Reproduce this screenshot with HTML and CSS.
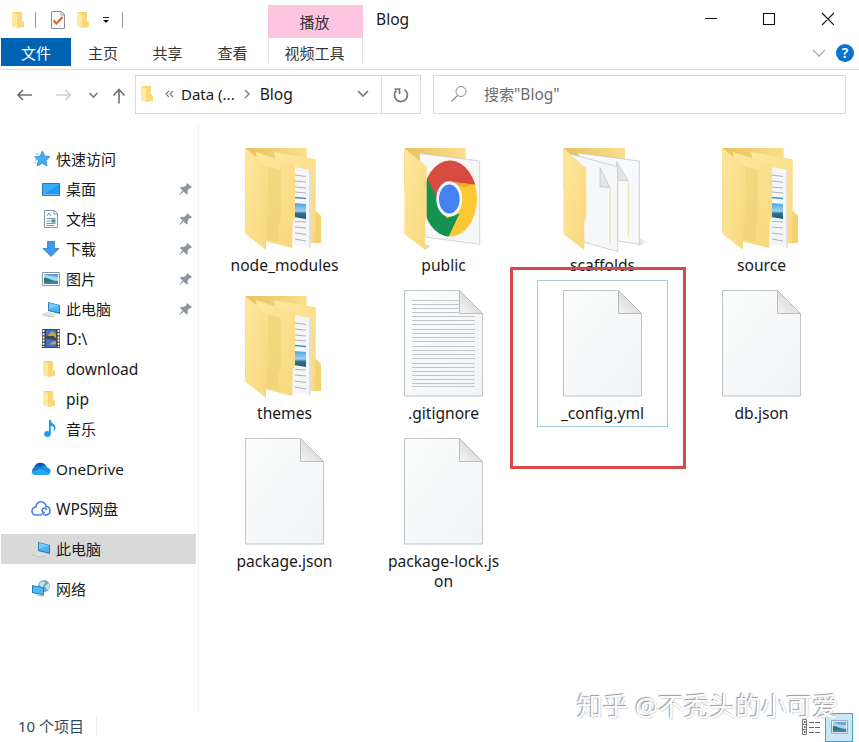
FILE: index.html
```html
<!DOCTYPE html>
<html lang="zh-CN">
<head>
<meta charset="utf-8">
<title>Blog</title>
<link rel="stylesheet" href="styles.css">
</head>
<body>
<svg class="defs" width="0" height="0" aria-hidden="true">
  <defs>
    <linearGradient id="gFlap" x1="0" y1="0" x2="1" y2="1"><stop offset="0" stop-color="#ffe79f"/><stop offset="1" stop-color="#f8d87c"/></linearGradient>
    <linearGradient id="gBack" x1="0" y1="0" x2="1" y2="0"><stop offset="0" stop-color="#e6c25e"/><stop offset="1" stop-color="#fbdf8b"/></linearGradient>
    <linearGradient id="gPaper" x1="0" y1="0" x2="1" y2="1"><stop offset="0" stop-color="#fcfdfd"/><stop offset="1" stop-color="#f1f3f5"/></linearGradient>
    <linearGradient id="gFold" x1="0" y1="1" x2="1" y2="0"><stop offset="0" stop-color="#f4f4f4"/><stop offset="1" stop-color="#c9cbcc"/></linearGradient>
    <linearGradient id="gPic" x1="0" y1="0" x2="0" y2="1"><stop offset="0" stop-color="#4aa3e0"/><stop offset=".5" stop-color="#9fd2ef"/><stop offset=".65" stop-color="#33718c"/><stop offset="1" stop-color="#1d597c"/></linearGradient>
    <linearGradient id="gShade" x1="0" y1="0" x2="1" y2="0"><stop offset="0" stop-color="#bbb" stop-opacity=".6"/><stop offset="1" stop-color="#ddd" stop-opacity="0"/></linearGradient>
    <clipPath id="cDisc"><ellipse cx="57" cy="58.6" rx="27" ry="38"/></clipPath>
  </defs>
  <symbol id="folder-docs" viewBox="0 0 100 116">
    <path d="M11.3 8H72.700V90H11.3z" fill="url(#gBack)"/>
    <path d="M40 12l41.700 7.300V71l5.300 5v27H60z" fill="url(#gFlap)"/>
    <path d="M81.700 71l5.300 5v27h-6z" fill="#f4d071"/>
    <path d="M60 27l16.300 3v78L58 104z" fill="#f5f6f7"/>
    <path d="M75 30l1.800 0v78l-1.800-.4z" fill="#dcdfe2"/>
    <path d="M61 35l11 1.500M61 41l11 1.200M61 47l11 1M61 52l11 1M61 81.500l11 .5M61 87l11 1M61 93l11 1.500M61 99l11 2" stroke="#9ba0a4" stroke-width=".8"/>
    <path d="M61 57.500l11 1" stroke="#3894cb" stroke-width="1.600"/>
    <path d="M60 63l12 1v15l-12-2z" fill="url(#gPic)"/>
    <path d="M22 12l39 13v53l-2.700 4v26L30 101z" fill="url(#gFlap)"/>
    <path d="M33.700 26l13 4v51l-2 4v17l-12.700-2z" fill="#edcf72" opacity=".6"/>
    <path d="M11.300 8l22.400 18.700V78L32 82v27.700L11.300 94z" fill="url(#gFlap)"/>
  </symbol>
  <symbol id="folder-chrome" viewBox="0 0 100 116">
    <path d="M86 98l12 4-12 4zM32 104l6 2-6 4z" fill="url(#gShade)"/>
    <path d="M11.300 8H72.700V50H11.300z" fill="url(#gBack)"/>
    <path d="M26.300 13.300L86.700 21v83.300L32 97z" fill="#f7f7f8" stroke="#c5c7c9" stroke-width=".7"/>
    <g clip-path="url(#cDisc)">
      <path d="M20 15h70v90H20z" fill="#fbc934"/>
      <path d="M20 20h70v25.500L58 42 45 63 33 38z" fill="#d84b40"/>
      <path d="M33 36l12.500 25 8 17 13-4.500L55 98H30z" fill="#159152"/>
      <path d="M58 42l22 2.500-9 3z" fill="#e9aa28"/>
    </g>
    <ellipse cx="56.300" cy="59" rx="13" ry="17.700" fill="#f2f5fb"/>
    <ellipse cx="56.300" cy="59" rx="10.300" ry="14.500" fill="#4681f0"/>
    <path d="M11.300 8l22.400 18.700V78L32 82v27.700L11.300 94z" fill="url(#gFlap)"/>
  </symbol>
  <symbol id="folder-papers" viewBox="0 0 100 116">
    <path d="M86 98l12 4-12 4z" fill="url(#gShade)"/>
    <path d="M11.300 8H73V50H11.300z" fill="url(#gBack)"/>
    <path d="M26 13l61.300 8v83.300L66 101" fill="#f8f9fa" stroke="#bcbfc1" stroke-width=".7"/>
    <path d="M64.700 21.700V40l11.600 1z" fill="#e4e6e7" stroke="#b9bcbe" stroke-width=".6"/>
    <path d="M76.300 42v55" stroke="#eadfb3"/>
    <path d="M18.700 14L65.700 26.700v85L32 102z" fill="#f5f7f9" stroke="#bcbfc1" stroke-width=".7"/>
    <path d="M48 27.500v19l10 1.200z" fill="#e4e6e7" stroke="#b3b6b8" stroke-width=".6"/>
    <path d="M58 48v55" stroke="#e6dba9"/>
    <path d="M11.300 8l21 18.700 2 1V77L32.300 82v28L11.300 94z" fill="url(#gFlap)"/>
  </symbol>
  <symbol id="file-blank" viewBox="0 0 100 116">
    <path d="M11.500 2.500h55l23 23v82.500h-78z" fill="url(#gPaper)" stroke="#c0c4c6"/>
    <path d="M66.500 2.500v23h23z" fill="url(#gFold)" stroke="#b9bdbf"/>
  </symbol>
  <symbol id="file-text" viewBox="0 0 100 116">
    <use href="#file-blank"/>
    <path d="M19 12.500h47M19 16.500h47M19 20.500h47M19 24.500h47M19 28.500h63M19 32.500h63M19 36.500h63M19 41.500h63M19 45.500h63M19 49.500h63M19 53.500h63M19 58.500h63M19 62.500h63M19 66.500h63M19 70.500h63M19 75.500h63M19 79.500h63M19 83.500h63M19 87.500h63M19 91.500h63M19 95.500h63M19 98.500h63" stroke="#c4c7c9"/>
  </symbol>
  <symbol id="i-folder" viewBox="0 0 14 18">
    <path d="M1 1h10v9l2 1v5H3z" fill="#f5cf6c"/>
    <path d="M1 1l5 2v14l-5-2z" fill="#ffe8a0"/><path d="M6 3l5-2v9l2 1v5l-7 1z" fill="#f9d878"/>
  </symbol>
  <symbol id="i-pin" viewBox="0 0 14 14">
    <path d="M8 1l5 4-1.500 1.300-1-.1-2 2.500.3 3-1.300.8-3-3L1 13l-.5-.5 3-4L1 6l1-1.200 3 .2 2.500-2z" fill="#8b96a0"/>
  </symbol>
  <symbol id="i-pc" viewBox="0 0 20 20">
    <path d="M7 3l12 3v9L7 12z" fill="#317faf"/><path d="M8 4l10 2.600v7L8 11z" fill="#4ab6f5"/><path d="M8 4l10 2.600L8 10z" fill="#72ccfb"/>
    <path d="M1 15l6-2 8 3-6 2z" fill="#dce0e4"/><path d="M1 15.500l8 2.500 5-1" fill="none" stroke="#b0b7bd" stroke-width=".7"/>
  </symbol>
  <symbol id="i-picture" viewBox="0 0 20 16">
    <path d="M1.500 1.500h17v13h-17z" fill="#fff" stroke="#8e979d"/><path d="M3 3h14v10H3z" fill="#a5d4f5"/>
    <path d="M3 3h14v3L9 5z" fill="#5f9fda"/><path d="M3 7c4-1 6 3 14 3v3H3z" fill="#317665"/><path d="M3 11l14-1v3H3z" fill="#3d83b2"/>
  </symbol>
</svg>

<div class="window">
  <header class="header">
    <div class="header-left">
      <div class="quick">
        <svg class="q-folder" width="14" height="18"><use href="#i-folder"/></svg>
        <span class="sep"></span>
        <svg class="q-check" width="16" height="20" viewBox="0 0 16 20"><path d="M1.500 1.500h10l3 3v14h-13z" fill="#fbfbfb" stroke="#8f8f8f"/><path d="M11 1.500v3.500h3.500" fill="none" stroke="#8f8f8f"/><path d="M3.500 10.500l3 3 6-6.500" fill="none" stroke="#d9602f" stroke-width="2"/></svg>
        <svg class="q-folder2" width="14" height="18"><use href="#i-folder"/></svg>
        <svg class="q-more" width="8" height="8" viewBox="0 0 8 8"><path d="M1 1.500h6" stroke="#222"/><path d="M1 4h6L4 7z" fill="#111"/></svg>
        <span class="sep"></span>
      </div>
      <nav class="tabs">
        <span class="tab tab-file">文件</span><span class="tab tab-home">主页</span><span class="tab">共享</span><span class="tab">查看</span>
      </nav>
    </div>
    <div class="context">
      <div class="context-title">播放</div>
      <div class="context-tab">视频工具</div>
    </div>
    <div class="header-right">
      <div class="caption">
        <span class="latin">Blog</span>
        <svg width="130" height="16" viewBox="0 0 130 16"><path d="M1 7.500h12M59.500 2.500h11v11h-11zM118 2l12 12M130 2l-12 12" fill="none" stroke="#111" stroke-width="1.100"/></svg>
      </div>
      <div class="ribbon-tools">
        <svg width="14" height="8" viewBox="0 0 14 8"><path d="M1 1l6 6 6-6" fill="none" stroke="#aaa" stroke-width="1.300"/></svg>
        <span class="help">?</span>
      </div>
    </div>
  </header>

  <div class="address-row">
    <svg class="nav-icons" width="120" height="20" viewBox="0 0 120 20" fill="none" stroke-width="1.600">
      <path d="M32 10H18M23 5l-5 5 5 5" stroke="#707070"/><path d="M56 10h14M65.500 5l5 5-5 5" stroke="#d0d0d0"/>
      <path d="M89.500 8l4 4 4-4" stroke="#777"/><path d="M119 18.500V4.500M113.500 10.500l5.500-6 5.500 6" stroke="#707070"/>
      </svg>
    <div class="address">
      <svg class="a-folder" width="14" height="18"><use href="#i-folder"/></svg>
      <svg class="a-more" width="9" height="8" viewBox="0 0 9 8"><path d="M4 1L1 4l3 3M8 1L5 4l3 3" fill="none" stroke="#777" stroke-width="1.100"/></svg>
      <span>Data (...</span>
      <svg class="a-chev" width="6" height="10" viewBox="0 0 6 10"><path d="M1 1l4 4-4 4" fill="none" stroke="#777" stroke-width="1.400"/></svg>
      <span class="latin">Blog</span>
      <svg class="a-down" width="12" height="8" viewBox="0 0 12 8"><path d="M1 1l5 5 5-5" fill="none" stroke="#777" stroke-width="1.600"/></svg>
      <span class="refresh"><svg width="18" height="18" viewBox="0 0 18 18"><path d="M12.500 3.600a6.500 6.500 0 1 1-8 .7M2.500 3h5v5" fill="none" stroke="#777" stroke-width="1.700"/></svg></span>
    </div>
    <div class="search">
      <svg width="18" height="18" viewBox="0 0 18 18"><circle cx="11" cy="6.500" r="5" fill="none" stroke="#888"/><path d="M7.500 10.500L1.500 16.500" stroke="#888" stroke-width="1.200"/></svg>
      <span>搜索<b>"Blog"</b></span>
    </div>
  </div>

  <div class="main">
    <aside class="sidebar">
      <div class="item top"><svg viewBox="0 0 20 20"><path d="M11.500 2l2.200 5 5.300.6-4 3.800 1 5.600-4.700-2.800L6 17l1.300-5.300L4 8.300 9 7z" fill="#41b0f2" stroke="#3287bd" stroke-width=".8"/><path d="M4 5h4M3 7.500h3M4 11h2M3.500 14h2" stroke="#83bce0"/></svg><span>快速访问</span></div>
      <div class="item"><svg viewBox="0 0 20 20"><path d="M1.500 4.500h17v12h-17z" fill="#1a9cf7" stroke="#2577ad"/><path d="M2 15h16v1.200H2z" fill="#77bde8"/><path d="M2 5h16L4 15H2z" fill="#39acfb"/></svg><span>桌面</span><svg class="pin"><use href="#i-pin"/></svg></div>
      <div class="item"><svg viewBox="0 0 20 20"><path d="M3.500 1.500h10l3 3v14h-13z" fill="#fff" stroke="#8b9499"/><path d="M13 1.500v3.500h3.500" fill="none" stroke="#8b9499"/><path d="M6 7l2-3 2 3M5.500 9.500h9M5.500 12h4M5.500 14.500h9M5.500 16.500h8" fill="none" stroke="#679fba"/><path d="M10.500 10.500h4v3h-4z" fill="#42879d"/></svg><span>文档</span><svg class="pin"><use href="#i-pin"/></svg></div>
      <div class="item"><svg viewBox="0 0 20 20"><path d="M6.500 2.500h7v7h4.500l-8 8-8-8h4.500z" fill="#3b9aef" stroke="#327bbd" stroke-width=".8"/></svg><span>下载</span><svg class="pin"><use href="#i-pin"/></svg></div>
      <div class="item"><svg viewBox="0 -2 20 20"><use href="#i-picture" width="20" height="16"/></svg><span>图片</span><svg class="pin"><use href="#i-pin"/></svg></div>
      <div class="item"><svg viewBox="0 0 20 20"><use href="#i-pc"/></svg><span>此电脑</span><svg class="pin"><use href="#i-pin"/></svg></div>
      <div class="item"><svg viewBox="0 0 20 20"><path d="M1 0h18v19H1z" fill="#45494d"/><path d="M2.500 1v17M17.500 1v17" stroke="#fff" stroke-width="1.700" stroke-dasharray="2 1.200"/><path d="M5 1h10v8H5zM5 10h10v8H5z" fill="#416fd0"/><path d="M7 6l4-4 4 3v3H8zM8 16l3-3 4-1v3z" fill="#c4a445"/><path d="M5 7h8v2H5zM8 10h7v1.500z" fill="#2b4f52"/></svg><span class="latin">D:\</span></div>
      <div class="item"><svg viewBox="-1 -1 20 20"><use href="#i-folder" width="14" height="18"/></svg><span class="latin">download</span></div>
      <div class="item"><svg viewBox="-1 -1 20 20"><use href="#i-folder" width="14" height="18"/></svg><span class="latin">pip</span></div>
      <div class="item"><svg viewBox="0 0 20 20"><ellipse cx="6.500" cy="15" rx="3.300" ry="3" fill="#209af0"/><path d="M8 1h2c0 4 5 4 4.500 8-.2 2-1.500 3-2.500 3 2-3 1-4.500-2.200-5v8H8z" fill="#209af0"/></svg><span>音乐</span></div>
      <div class="item top gap"><svg viewBox="0 0 20 20"><path d="M3 9a6.500 6.500 0 0 1 12-2l-6 7z" fill="#0c5bad"/><path d="M4 8a5 5 0 0 1 6 1l-7 6A3.800 3.800 0 0 1 4 8z" fill="#1679ca"/><path d="M9 9c3-4 7-2.500 7.500 0 4 .2 4.500 6-.5 6z" fill="#1590e2"/><path d="M.5 13.500L9 9.500l10 5a3 3 0 0 1-3 1.500H4.500A4 4 0 0 1 .5 13.500z" fill="#27a5ee"/></svg><span class="latin-s">OneDrive</span></div>
      <div class="item top gap"><svg viewBox="0 0 20 20"><path d="M14 13.500c-3 .2-4-3-1.500-4.200 1.500-.6 3 .2 3 2M11 16H5a4 4 0 0 1 0-8 5 5 0 0 1 10-.5c5 0 5.500 8 0 8.500-3 0-3-.5-4-2" fill="none" stroke="#4a7de2" stroke-width="1.600"/></svg><span><b>WPS</b>网盘</span></div>
      <div class="item top gap selected"><svg viewBox="0 0 20 20"><use href="#i-pc"/></svg><span>此电脑</span></div>
      <div class="item top gap"><svg viewBox="0 0 20 20"><circle cx="13" cy="7" r="6" fill="#74a9c3"/><path d="M8 5q4-5 6-1l-3 5M14 7l4-3q2 5-2 7z" fill="#c8e0e9"/><path d="M1 6l12 2.500v8L1 14z" fill="#2581b5"/><path d="M2 7l10 2.200v6L2 13z" fill="#4abaf7"/><path d="M5 16l3-1 5 2-2 1z" fill="#b6c1c8"/></svg><span>网络</span></div>
    </aside>

    <section class="files">
      <div class="file"><svg><use href="#folder-docs"/></svg><span>node_modules</span></div>
      <div class="file"><svg><use href="#folder-chrome"/></svg><span>public</span></div>
      <div class="file"><svg><use href="#folder-papers"/></svg><span>scaffolds</span></div>
      <div class="file"><svg><use href="#folder-docs"/></svg><span>source</span></div>
      <div class="file"><svg><use href="#folder-docs"/></svg><span>themes</span></div>
      <div class="file"><svg><use href="#file-text"/></svg><span>.gitignore</span></div>
      <div class="file focused"><svg><use href="#file-blank"/></svg><span>_config.yml</span><i class="marker"></i></div>
      <div class="file"><svg><use href="#file-blank"/></svg><span>db.json</span></div>
      <div class="file"><svg><use href="#file-blank"/></svg><span>package.json</span></div>
      <div class="file"><svg><use href="#file-blank"/></svg><span>package-lock.js<br>on</span></div>
    </section>
  </div>

  <footer class="status">
    <span class="count">10 个项目</span>
    <div class="views">
      <svg width="20" height="18" viewBox="0 0 20 18"><path d="M1.500 1.500h4v15h-4zM1.500 6.500h4M1.500 11.500h4" fill="#fff" stroke="#777"/><path d="M3 4h1.500M3 9h1.500M3 14h1.500" stroke="#333" stroke-width="1.500"/><path d="M8 4.500h5M14 4.500h5M8 9.500h5M14 9.500h5M8 14.500h5M14 14.500h5" stroke="#666"/></svg>
      <span class="view-on"><svg width="19" height="16"><use href="#i-picture"/></svg></span>
    </div>
  </footer>
  <div class="watermark">知乎 @不秃头的小可爱</div>
</div>
</body>
</html>
```
FILE: styles.css
```css
* { box-sizing: border-box; }
body {
  margin: 0;
  background: #fff;
  color: #1a1a1a;
  font: 15px/20px "Noto Sans", "Noto Sans CJK SC", sans-serif;
}
svg { display: block; flex: none; }
b { font-weight: 400; font-size: 15.500px; }
.latin { font-size: 15.600px; }
.latin-s { font-size: 15.300px; }
.defs { position: absolute; }
.window {
  position: relative;
  width: 859px;
  height: 742px;
  overflow: hidden;
  display: flex;
  flex-direction: column;
}

/* Title bar and ribbon tabs */
.header { display: flex; height: 70px; border-bottom: 1px solid #dcdcdc; flex: none; }
.header-left { width: 268px; }
.quick { display: flex; align-items: center; height: 38px; padding: 2px 0 0 11px; }
.sep { width: 1px; height: 16px; background: #999; }
.q-folder { margin-right: 10px; }
.q-check { margin-left: 14px; }
.q-folder2 { margin: 0 12px 0 10px; }
.q-more { margin-right: 12px; }
.tabs { display: flex; height: 28px; }
.tab { width: 65px; text-align: center; line-height: 30px; color: #333; }
.tab-file { width: 70px; margin-left: 1px; background: #0063b1; color: #fff; }
.tab-home { width: 64px; }
.context { width: 95px; padding-top: 5px; text-align: center; color: #333; }
.context-title { height: 33px; line-height: 35px; padding-right: 2px; background: #fdc5df; }
.context-tab { height: 25px; line-height: 30px; padding-right: 2px; border: solid #e2e2e2; border-width: 0 1px; }
.header-right { flex: 1; }
.caption { display: flex; justify-content: space-between; align-items: center; height: 38px; padding: 0 25px 0 13px; }
.ribbon-tools { display: flex; justify-content: flex-end; align-items: center; gap: 10px; height: 30px; padding-right: 5px; }
.help { width: 18px; height: 18px; border-radius: 50%; background: #0873ce; color: #fff; font-size: 14px; font-weight: 600; line-height: 18px; text-align: center; }

/* Address bar */
.address-row { display: flex; height: 55px; padding: 5px 13px 0 0; flex: none; }
.nav-icons { margin: 10px 15px 0 0; overflow: visible; }
.address { display: flex; align-items: center; width: 286px; height: 39px; padding-bottom: 1px; border: 1px solid #d9d9d9; }
.a-folder { margin: 0 11px 0 4px; }
.a-more { margin-right: 7px; }
.a-chev { margin: 0 10px 0 9px; }
.a-down { margin-left: auto; }
.refresh { display: flex; align-items: center; justify-content: center; width: 39px; height: 37px; margin: 1px 0 0 12px; border-left: 1px solid #d9d9d9; }
.search { display: flex; align-items: center; gap: 16px; flex: 1; height: 39px; margin-left: 12px; padding: 0 0 1px 16px; border: 1px solid #d9d9d9; color: #6d6d6d; }

/* Navigation pane */
.main { display: flex; height: 587px; flex: none; }
.sidebar { width: 199px; padding: 19px 2px 0 1px; border-right: 1px solid #f0f0f0; }
.item { display: flex; align-items: center; gap: 5px; height: 30px; padding: 0 3px 0 40px; }
.item svg { width: 20px; height: 20px; }
.item .pin { width: 14px; height: 14px; margin-left: auto; }
.item.top { padding-left: 30px; }
.item.gap { margin-top: 10px; }
.item.selected { background: #d9d9d9; }

/* File grid */
.files { display: grid; grid-template-columns: repeat(4, 131px); grid-auto-rows: 147px; gap: 1px 28px; align-content: start; padding: 7px 0 0 20px; }
.file { position: relative; display: flex; flex-direction: column; align-items: center; padding-top: 8px; text-align: center; font-size: 15.600px; }
.file svg { width: 100px; height: 116px; margin: 0 1px -1px 0; }
.focused { outline: 1px solid #a6cbe0; outline-offset: -1px; }
.marker { position: absolute; left: -27px; top: -13px; width: 176px; height: 202px; border: 3px solid #d94848; }

/* Status bar */
.status { display: flex; justify-content: space-between; height: 30px; color: #33475c; }
.count { margin: 4px 0 0 18px; height: 20px; padding-right: 12px; border-right: 1px solid #eee; }
.views { display: flex; align-items: center; gap: 4px; padding-right: 6px; }
.view-on { display: flex; align-items: center; justify-content: center; width: 28px; height: 29px; border: 1px solid #4f9fc4; background: #c8e8f6; }
.watermark { position: absolute; left: 577px; top: 691px; font-size: 25.700px; line-height: 32px; color: #fff; text-shadow: -1px -1px 1px #999, 1px 1px 1px #ddd; white-space: nowrap; }
```
